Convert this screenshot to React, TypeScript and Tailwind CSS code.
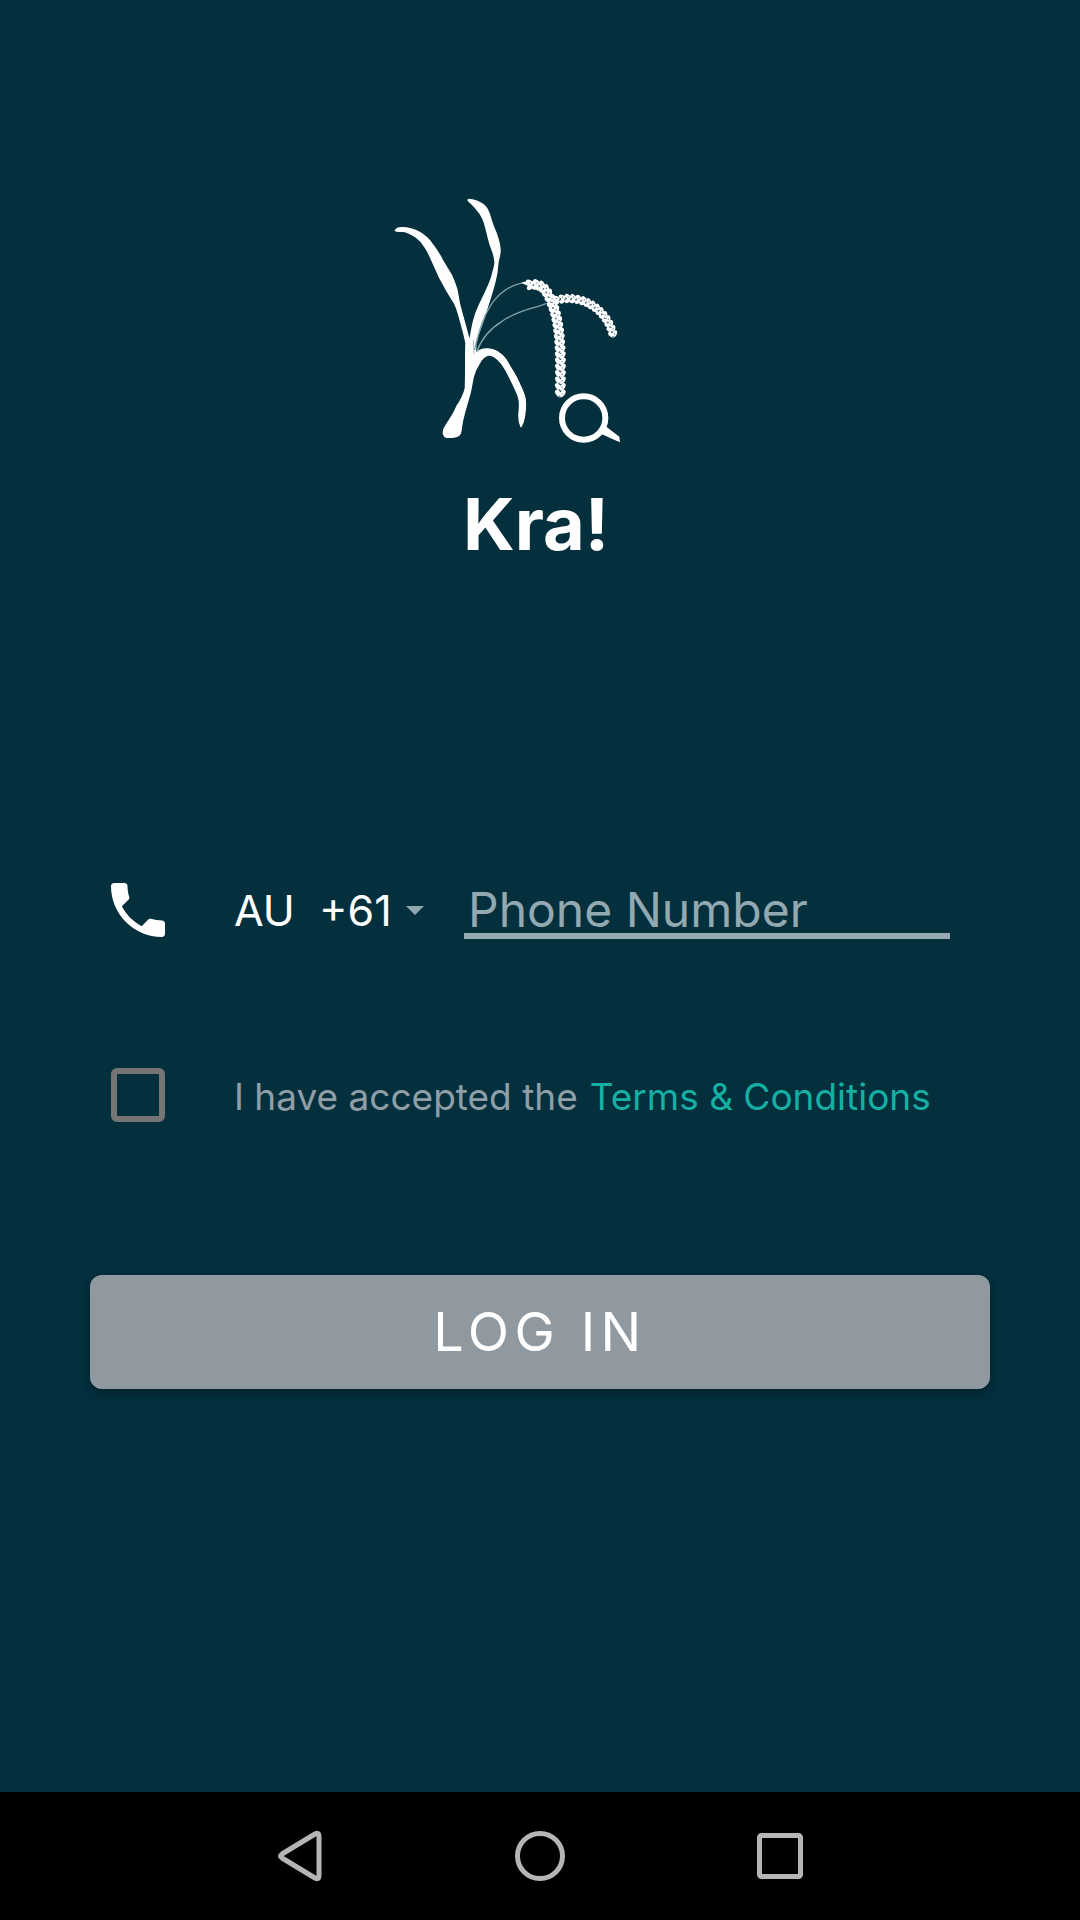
import { useState } from "react";

type Point = [number, number];

// Centre lines of the seed heads, as cubic curves.
const FRONT_TOP: Point[] = [[450, 314], [492, 308], [503, 338], [518, 374]];
const FRONT_DROP: Point[] = [[518, 374], [546, 450], [541, 540], [541, 640]];
const BACK: Point[] = [[530, 360], [610, 340], [680, 390], [699, 462]];

function pointOn([a, b, c, d]: Point[], t: number) {
  const u = 1 - t;
  const at = (i: 0 | 1) =>
    u * u * u * a[i] + 3 * u * u * t * b[i] + 3 * u * t * t * c[i] + t * t * t * d[i];
  const slope = (i: 0 | 1) =>
    u * u * (b[i] - a[i]) + 2 * u * t * (c[i] - b[i]) + t * t * (d[i] - c[i]);
  return { x: at(0), y: at(1), angle: (Math.atan2(slope(1), slope(0)) * 180) / Math.PI };
}

function SeedHead({ curve, count, size }: { curve: Point[]; count: number; size: number }) {
  const grains = Array.from({ length: count }, (_, i) => pointOn(curve, i / (count - 1)));
  return (
    <g>
      {grains.map((g, i) => (
        <g key={i} transform={`translate(${g.x} ${g.y}) rotate(${g.angle})`}>
          <ellipse cx={0} cy={-size * 0.5} rx={size * 0.85} ry={size * 0.52} transform={`rotate(32 0 ${-size * 0.5})`} />
          <ellipse cx={0} cy={size * 0.5} rx={size * 0.85} ry={size * 0.52} transform={`rotate(-32 0 ${size * 0.5})`} />
          <circle cx={size * 0.3} cy={0} r={size * 0.55} />
        </g>
      ))}
      {grains.map((g, i) => (
        <g key={i} transform={`translate(${g.x} ${g.y}) rotate(${g.angle})`} fill="#6f8891">
          <circle cx={size * 0.7} cy={size * 0.2} r={3} />
          <circle cx={size * 0.1} cy={-size * 0.4} r={2} />
        </g>
      ))}
    </g>
  );
}

function Logo() {
  return (
    <svg viewBox="0 0 960 840" className="h-[280px] w-[320px]" fill="#fff" role="img" aria-label="Kra! logo">
      <path
        stroke="#fff"
        strokeWidth="4"
        strokeLinejoin="round"
        d="M46 152C50 145 54 143 62 143C90 142 104 149 120 158C136 168 146 177 155 190C168 206 178 222 187 240L214 285C222 302 227 316 231 330L238 370C248 408 260 450 269 485C273 462 276 438 283 415C290 388 305 362 315 340C326 316 334 300 338 280C342 264 346 255 345 245C344 226 337 212 331 195C325 176 322 162 318 145C313 124 306 106 293 92C284 78 272 70 264 60C264 57 276 59 292 64C305 69 314 76 320 85C328 98 331 112 335 125C340 142 348 156 352 170C357 186 361 200 360 215C359 230 354 240 353 255C352 272 350 286 346 300C341 322 335 340 329 360C322 380 318 396 312 415C302 442 291 470 287 494L287 520C298 508 312 506 325 507C341 508 350 513 360 521C374 531 382 544 390 560C402 578 412 596 420 615C429 634 436 648 436 665C437 680 436 692 434 705C432 722 428 732 423 740C418 730 416 716 417 700C419 680 421 666 415 650C408 628 396 606 385 585C376 566 366 550 355 540C346 530 336 524 325 525C310 528 304 538 298 550C288 564 284 576 280 590C276 608 274 624 270 640C262 668 254 694 248 720C244 736 245 748 241 760C237 769 230 772 216 772L200 772C190 770 187 758 193 745C204 724 220 706 230 680C242 662 252 644 256 625C258 580 256 530 258 490C253 462 243 430 236 404C232 390 230 382 224 371L199 330C190 312 180 298 173 280L154 238C147 222 143 212 134 200C126 186 116 177 105 169C92 161 82 155 70 154C60 153 52 155 46 152Z"
      />
      <g fill="none" stroke="#7fa3ac" strokeWidth="4">
        <path d="M284 510C296 450 316 394 345 358C370 330 400 312 436 308" />
        <path d="M290 516C304 476 330 446 366 424C410 392 454 388 500 370" />
        <path d="M280 480L282 522" strokeWidth="2" />
      </g>
      <path d="M424 308C446 300 466 302 480 312C474 326 456 328 444 318Z" />
      <SeedHead curve={FRONT_TOP} count={7} size={14} />
      <SeedHead curve={BACK} count={15} size={12} />
      <SeedHead curve={FRONT_DROP} count={16} size={14} />
      <circle cx="611" cy="714" r="65" fill="none" stroke="#fff" strokeWidth="18" />
      <path d="M656 760C668 758 674 750 676 738L718 770L720 787C698 778 680 768 656 760Z" />
    </svg>
  );
}

export default function App() {
  const [accepted, setAccepted] = useState(false);
  return (
    <div className="flex min-h-screen flex-col bg-[#042f3d] font-['Inter','Liberation_Sans',sans-serif] text-white">
      <main className="flex flex-1 flex-col px-[90px] pt-[180px]">
        <header className="flex flex-col items-center">
          <Logo />
          <h1 className="mt-5 pr-2 text-[72px] leading-[88px] font-bold">Kra!</h1>
        </header>

        <form className="mt-[306px] flex flex-col" onSubmit={(e) => e.preventDefault()}>
          <div className="flex items-center pr-10 pl-3">
            <svg viewBox="0 0 24 24" className="size-[72px] shrink-0" fill="#fff" aria-hidden="true">
              <path d="M6.62 10.79c1.44 2.83 3.76 5.14 6.59 6.59l2.2-2.2c.27-.27.67-.36 1.02-.24 1.12.37 2.33.57 3.57.57.55 0 1 .45 1 1V20c0 .55-.45 1-1 1-9.39 0-17-7.61-17-17 0-.55.45-1 1-1h3.5c.55 0 1 .45 1 1 0 1.25.2 2.45.57 3.57.11.35.03.74-.25 1.02l-2.2 2.2z" />
            </svg>
            <div className="relative ml-[60px] flex w-[190px] shrink-0 items-center">
              <select
                aria-label="Country code"
                className="w-full appearance-none bg-transparent text-[43px] leading-[56px] outline-none"
              >
                <option>AU&nbsp; +61</option>
              </select>
              <svg viewBox="0 0 18 9" className="pointer-events-none absolute right-0 h-[9px] w-[18px]" fill="#90a8b0" aria-hidden="true">
                <path d="M0 0H18L9 9Z" />
              </svg>
            </div>
            <input
              type="tel"
              aria-label="Phone Number"
              placeholder="Phone Number"
              className="ml-10 h-[58px] min-w-0 flex-1 border-b-6 border-[#96acb3] bg-transparent pt-1 pl-1 text-[48px] leading-[48px] outline-none placeholder:text-[#93a9b2]"
            />
          </div>

          <div className="mt-[113px] flex items-center pl-3">
            <div className="flex size-[72px] shrink-0 items-center justify-center">
              <input
                id="terms"
                type="checkbox"
                checked={accepted}
                onChange={(e) => setAccepted(e.target.checked)}
                className="size-[54px] appearance-none rounded-md border-6 border-[#757575] checked:bg-[#12b0a0]"
              />
            </div>
            <label htmlFor="terms" className="ml-[60px] pt-1 text-[37px] leading-[48px] whitespace-nowrap text-[#8f9ea7]">
              I have accepted the
            </label>
            <a href="#terms" className="ml-3 pt-1 text-[37px] leading-[48px] whitespace-nowrap text-[#15b0a2]">
              Terms &amp; Conditions
            </a>
          </div>

          <button
            type="submit"
            className="mt-[144px] h-[114px] rounded-xl bg-[#90999f] text-[54px] leading-[64px] tracking-widest shadow-[0_4px_8px_rgba(0,0,0,0.3)]"
          >
            LOG IN
          </button>
        </form>
      </main>

      <nav className="flex h-32 items-center justify-center gap-[168px] bg-black" aria-label="System navigation">
        <button type="button" aria-label="Back">
          <svg viewBox="0 0 72 72" className="size-[72px]" fill="none" stroke="#b5b5b5" strokeWidth="5" strokeLinejoin="round">
            <path d="M51 14Q55 12 55 16V56Q55 60 51 58L18 38Q15 36 18 34Z" />
          </svg>
        </button>
        <button type="button" aria-label="Home">
          <svg viewBox="0 0 72 72" className="size-[72px]" fill="none" stroke="#b5b5b5" strokeWidth="5">
            <circle cx="36" cy="36" r="22.5" />
          </svg>
        </button>
        <button type="button" aria-label="Recent apps">
          <svg viewBox="0 0 72 72" className="size-[72px]" fill="none" stroke="#b5b5b5" strokeWidth="5">
            <rect x="15.5" y="15.5" width="41" height="41" rx="2" />
          </svg>
        </button>
      </nav>
    </div>
  );
}
